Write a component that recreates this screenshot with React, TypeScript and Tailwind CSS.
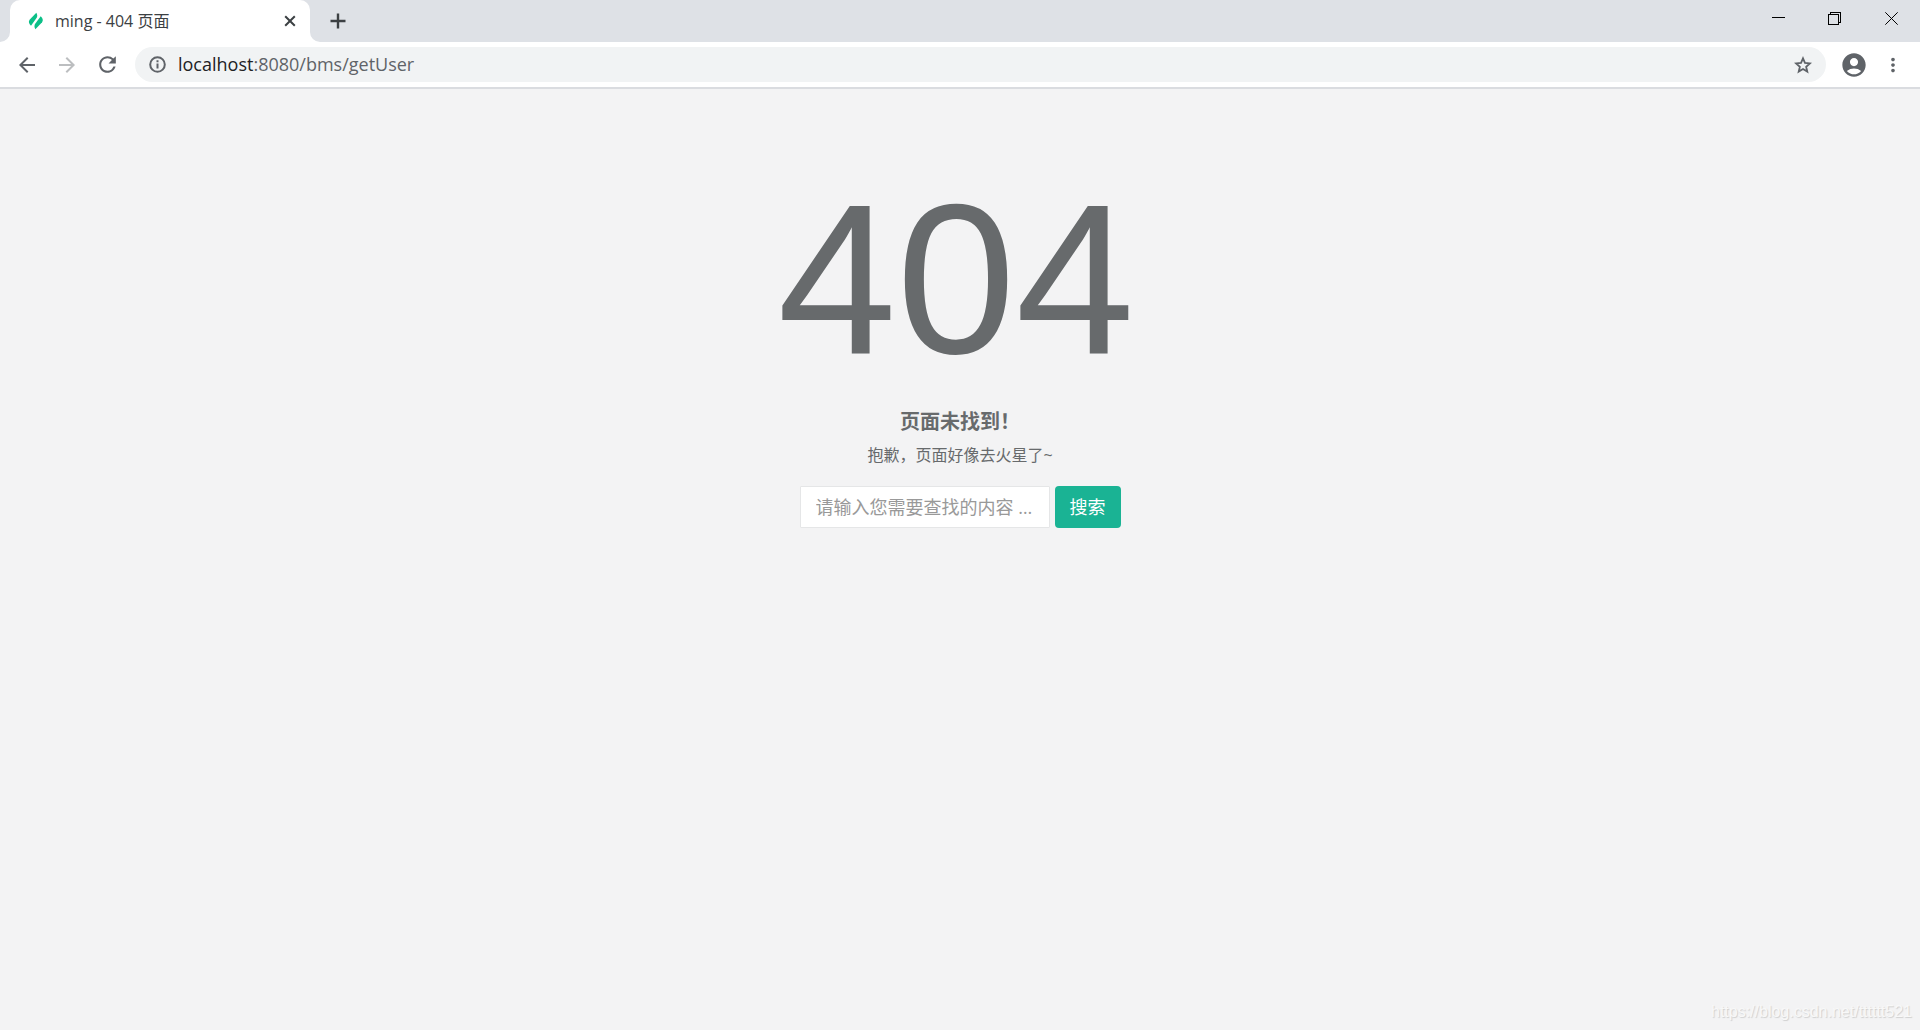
import React, { useState } from 'react';
import { MdArrowBack, MdArrowForward, MdRefresh, MdAccountCircle, MdMoreVert } from 'react-icons/md';

const TabStrip: React.FC = () => (
  <div className="flex h-[42px] bg-[#dee1e6] pl-[10px]">
    {/* Active tab */}
    <div className="relative flex w-[300px] items-center rounded-t-[10px] bg-white pr-[10px] pl-[18px]">
      <svg className="absolute bottom-0 -left-[10px]" width="10" height="10" viewBox="0 0 10 10">
        <path d="M10 0v10H0A10 10 0 0 0 10 0z" fill="#fff" />
      </svg>
      <svg className="absolute -right-[10px] bottom-0" width="10" height="10" viewBox="0 0 10 10">
        <path d="M0 0v10h10A10 10 0 0 1 0 0z" fill="#fff" />
      </svg>
      <svg width="16" height="18" viewBox="0 0 16 18" fill="#0bbf87">
        <path d="M8.300.7c1.200 1.800 1.300 3.800.2 5.400L3 13.700C.8 12 .3 9.400 1.600 7.700z" />
        <path d="M7.400 17.200c-1.200-1.800-1.300-3.800-.2-5.400l5.500-7.600c2.200 1.700 2.700 4.300 1.400 6z" />
      </svg>
      <span className="ml-[11px] flex-1 text-base text-[#3c4043]">ming - 404 页面</span>
      <button aria-label="Close tab" className="flex h-5 w-5 items-center justify-center">
        <svg width="12" height="12" viewBox="0 0 12 12" stroke="#3c4043" strokeWidth="2">
          <path d="M1.200 1.200l9.600 9.600M10.800 1.200l-9.600 9.600" />
        </svg>
      </button>
    </div>
    <button aria-label="New tab" className="ml-[18px] flex w-5 items-center justify-center">
      <svg width="16" height="16" viewBox="0 0 16 16" stroke="#3c4043" strokeWidth="2.400">
        <path d="M8 .5v15M.5 8h15" />
      </svg>
    </button>

    {/* Window buttons */}
    <div className="ml-auto flex h-[37px]">
      <button aria-label="Minimize" className="flex w-14 items-center justify-center">
        <svg width="13" height="13" viewBox="0 0 13 13">
          <path d="M0 5.500h13" stroke="#000" />
        </svg>
      </button>
      <button aria-label="Restore" className="flex w-14 items-center justify-center">
        <svg width="13" height="13" viewBox="0 0 13 13" fill="none" stroke="#000" shapeRendering="crispEdges">
          <path d="M.5 2.500h10v10H.5zM2.500 2.500v-2h10v10h-2" />
        </svg>
      </button>
      <button aria-label="Close" className="flex w-[58px] items-center justify-center">
        <svg width="13" height="13" viewBox="0 0 13 13" stroke="#000">
          <path d="M.3.3l12.400 12.400M12.700.3L.3 12.700" />
        </svg>
      </button>
    </div>
  </div>
);

const Toolbar: React.FC = () => (
  <div className="flex h-[47px] items-center border-b-2 border-[#dadce0] bg-white pr-4 pl-[15px] text-[#5f6368]">
    <button aria-label="Back"><MdArrowBack className="h-6 w-6" /></button>
    <button aria-label="Forward" className="ml-4 text-[#bcbec0]"><MdArrowForward className="h-6 w-6" /></button>
    <button aria-label="Reload" className="ml-4"><MdRefresh className="h-[25px] w-[25px]" /></button>
    <div className="ml-[15px] flex h-[35px] flex-1 items-center rounded-full bg-[#f1f3f4] pr-[14px] pl-[14px]">
      <svg width="17" height="17" viewBox="0 0 17 17" fill="none" stroke="currentColor" strokeWidth="2">
        <circle cx="8.500" cy="8.500" r="7.300" />
        <path d="M8.500 7.500v5M8.500 4.200v2" />
      </svg>
      <span className="ml-3 flex-1 text-[18px]">
        <span className="text-[#202124]">localhost</span>:8080/bms/getUser
      </span>
      <button aria-label="Bookmark this page">
        <svg width="18" height="18" viewBox="0 0 24 24" fill="none" stroke="currentColor" strokeWidth="2.400">
          <path d="M12 3.200l2.600 6.100 6.600.6-5 4.400 1.500 6.500-5.700-3.500-5.700 3.500 1.500-6.500-5-4.400 6.600-.6z" />
        </svg>
      </button>
    </div>
    <button aria-label="Profile" className="ml-[14px]"><MdAccountCircle className="h-7 w-7" /></button>
    <button aria-label="Menu" className="ml-[14px]"><MdMoreVert className="h-[22px] w-[22px]" /></button>
  </div>
);

const NotFound: React.FC = () => {
  const [keyword, setKeyword] = useState('');

  return (
    <main className="flex flex-1 flex-col items-center bg-[#f3f3f4] pt-[70px] text-[#676a6c]">
      <h1 className="mr-2 font-['Liberation_Sans',sans-serif] text-[214px] leading-[240px]">404</h1>
      <h3 className="mt-[11px] text-[20px] leading-[24px] font-bold">页面未找到！</h3>
      <p className="mt-[9px] text-[16px] leading-[24px]">抱歉，页面好像去火星了~</p>
      <form className="mt-[19px] flex gap-[5px]" onSubmit={(e) => e.preventDefault()}>
        <input
          type="text"
          aria-label="搜索内容"
          value={keyword}
          onChange={(e) => setKeyword(e.target.value)}
          placeholder="请输入您需要查找的内容 …"
          className="h-[42px] w-[250px] rounded-[1px] border border-[#e5e6e7] bg-white px-[15px] text-[18px] outline-none placeholder:text-[#999]"
        />
        <button type="submit" className="h-[42px] rounded-[4px] bg-[#1ab394] px-[15px] text-[18px] text-white">搜索</button>
      </form>
    </main>
  );
};

const App: React.FC = () => (
  <div className="relative flex min-h-screen flex-col font-['Open_Sans','Noto_Sans_CJK_SC',sans-serif]">
    <TabStrip />
    <Toolbar />
    <NotFound />
    <a
      href="https://blog.csdn.net/tttttt521"
      className="absolute right-2 bottom-2 font-['Liberation_Sans',sans-serif] text-[16px] leading-5 text-[#f8f8f8] [text-shadow:1px_1px_1px_#cfcfcf]"
    >
      https://blog.csdn.net/tttttt521
    </a>
  </div>
);

export default App;
